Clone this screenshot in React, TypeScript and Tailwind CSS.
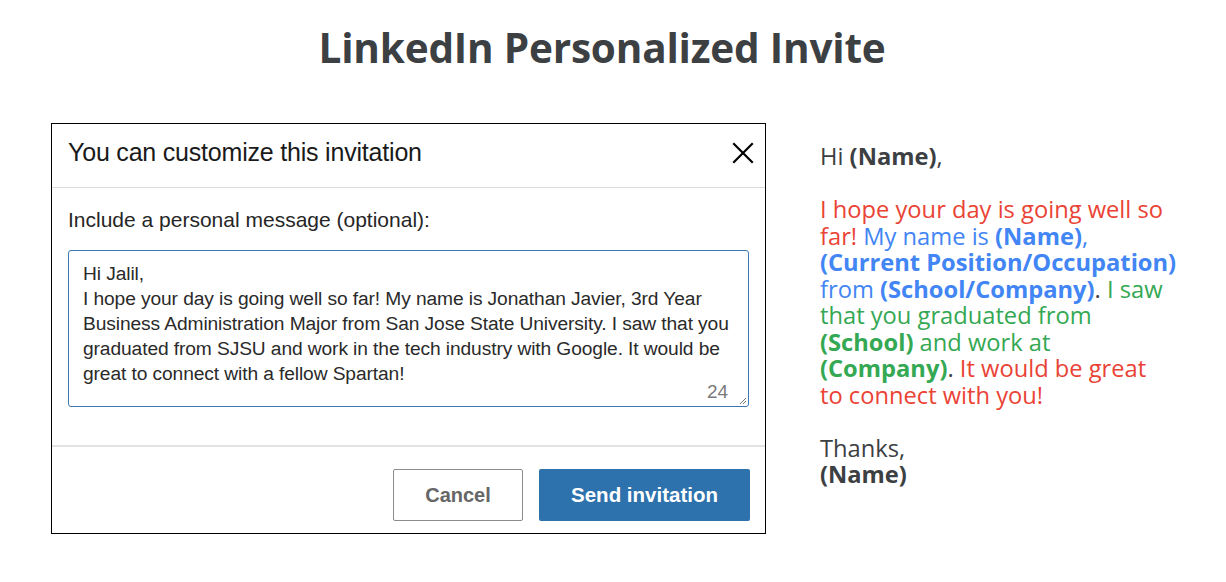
import React from "react";

const R = "text-[#ea4335]";
const B = "text-[#4285f4]";
const G = "text-[#34a853]";

export default function App() {
  return (
    <div className="w-[1226px] h-[582px] bg-white overflow-hidden">
      <div className="h-[123px] flex justify-center pt-[22px] pr-[22px]">
        <h1 className="text-[40.5px] leading-[52px] font-bold text-[#3c4043] [font-family:'Open_Sans',sans-serif] tracking-[-0.2px]">
          LinkedIn Personalized Invite
        </h1>
      </div>
      <div className="flex pl-[51px]">
        <div className="w-[715px] h-[411px] border-[1.5px] border-black flex flex-col [font-family:'Liberation_Sans',Arial,sans-serif]">
          <div className="h-[64px] shrink-0 flex items-center justify-between pl-[16px] pr-[9px] pb-[5px] border-b border-[#dcdcdc]">
            <span className="text-[25px] text-[#1a1a1a] tracking-[-0.2px]">You can customize this invitation</span>
            <svg width="26" height="26" viewBox="0 0 24 24" className="text-black">
              <path d="M3 3 L21 21 M21 3 L3 21" stroke="currentColor" strokeWidth="2" fill="none" />
            </svg>
          </div>
          <div className="h-[259px] shrink-0 px-[16px] pt-[20px] border-b-2 border-[#e3e3e3]">
            <div className="text-[21px] leading-[24px] text-[#262626]">Include a personal message (optional):</div>
            <div className="relative mt-[18px] h-[157px] border-[1.5px] border-[#3b79b3] rounded-[3px] pl-[14px] pt-[10px] text-[19.2px] leading-[25px] text-[#2a2a2a] tracking-[-0.1px] whitespace-nowrap">
              <div>Hi Jalil,</div>
              <div>I hope your day is going well so far! My name is Jonathan Javier, 3rd Year</div>
              <div>Business Administration Major from San Jose State University. I saw that you</div>
              <div>graduated from SJSU and work in the tech industry with Google. It would be</div>
              <div>great to connect with a fellow Spartan!</div>
              <span className="absolute right-[20px] bottom-[2px] text-[19px] text-[#7a7a7a]">24</span>
              <svg width="10" height="10" viewBox="0 0 10 10" className="absolute right-[1px] bottom-[1px]">
                <path d="M9 3 L3 9 M9 6 L6 9" stroke="#777" strokeWidth="1" />
              </svg>
            </div>
          </div>
          <div className="flex-1 flex items-start justify-end gap-[16px] pr-[15px] pt-[22px]">
            <div className="w-[130px] h-[52px] border border-[#8c8c8c] rounded-[2px] flex items-center justify-center text-[20px] font-bold text-[#666]">
              Cancel
            </div>
            <div className="w-[211px] h-[52px] bg-[#2e72ad] rounded-[2px] flex items-center justify-center text-[20.5px] font-bold text-white">
              Send invitation
            </div>
          </div>
        </div>
        <div className="ml-[54px] pt-[20px] text-[23.7px] leading-[26.5px] text-[#3c4043] [font-family:'Open_Sans',sans-serif] whitespace-nowrap">
          <div>Hi <b>(Name)</b>,</div>
          <div className="h-[26.5px]" />
          <div className={R}>I hope your day is going well so</div>
          <div><span className={R}>far!</span> <span className={B}>My name is <b>(Name)</b>,</span></div>
          <div className={B}><b>(Current Position/Occupation)</b></div>
          <div><span className={B}>from <b>(School/Company)</b></span>. <span className={G}>I saw</span></div>
          <div className={G}>that you graduated from</div>
          <div className={G}><b>(School)</b> and work at</div>
          <div><b className={G}>(Company)</b>. <span className={R}>It would be great</span></div>
          <div className={R}>to connect with you!</div>
          <div className="h-[26.5px]" />
          <div>Thanks,</div>
          <div><b>(Name)</b></div>
        </div>
      </div>
    </div>
  );
}
